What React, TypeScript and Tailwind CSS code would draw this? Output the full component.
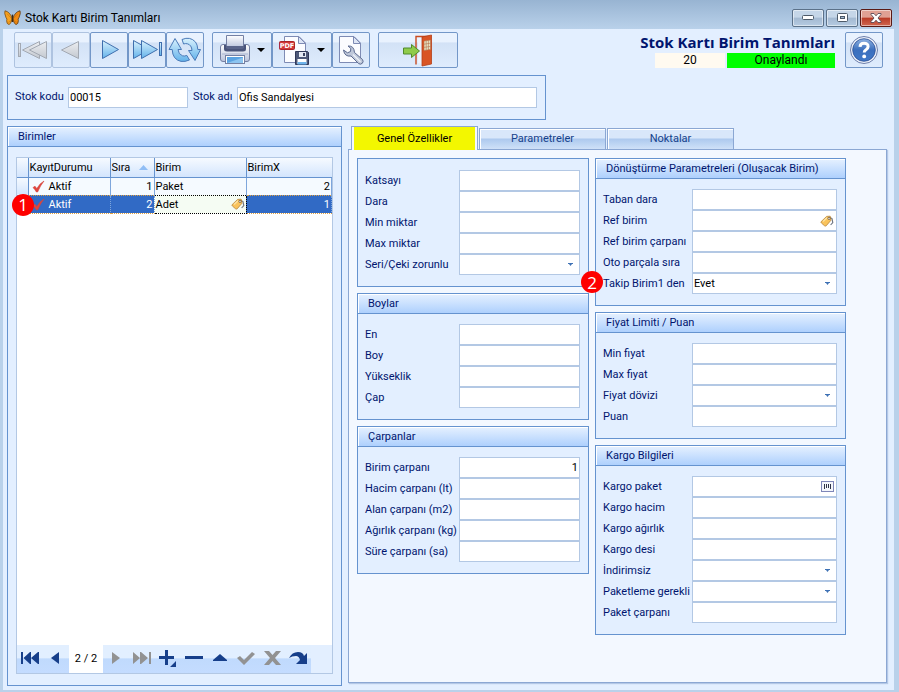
import React, { useId, useState } from 'react';

const TagIcon: React.FC = () => (
  <svg width="14" height="14" viewBox="0 0 14 14" aria-hidden="true">
    <path d="M9 3 L12 4.6 L12.8 8.6 L10.6 11" fill="none" stroke="#6b7280" strokeWidth="1.1" />
    <path d="M1.2 7.6 L6.6 2.4 L10.2 2.2 L11 6.2 L6.2 11.8 Q5.4 12.4 4.6 11.800 L1.4 9 Q0.6 8.3 1.2 7.6 Z" fill="#f9c35c" stroke="#b5843c" strokeWidth="0.8" />
    <path d="M3 7.6 L7 3.8" stroke="#fde2a0" strokeWidth="1.4" />
    <circle cx="9" cy="4.400" r="1.100" fill="#fff" stroke="#6b5335" strokeWidth="0.800" />
  </svg>
);

const BarcodeIcon: React.FC = () => (
  <svg width="13" height="11" viewBox="0 0 13 11" shapeRendering="crispEdges" aria-hidden="true">
    <rect x="0.5" y="0.5" width="12" height="10" fill="#f4f6fb" stroke="#7f86b8" />
    <path d="M3.500 3v5M5.500 3v4M7.500 3v4M9.500 3v5" stroke="#2f3346" />
  </svg>
);

const CaretIcon: React.FC = () => (
  <svg width="5" height="3" viewBox="0 0 5 3" aria-hidden="true">
    <path d="M0 0h5v1H4L2.5 3 1 1H0z" fill="#3f72b5" />
  </svg>
);

const RedCheck: React.FC = () => (
  <svg width="13" height="13" viewBox="0 0 13 13" aria-hidden="true">
    <path d="M1 7.6 L3 6.2 L4.8 8.6 Q7.6 3.4 12 1 Q8.4 5.4 5.6 12 L4.4 12 Q2.8 9.2 1 7.6 Z" fill="#e2453c" stroke="#d0453e" strokeWidth="0.6" />
  </svg>
);

const ButterflyIcon: React.FC = () => (
  <svg width="17" height="16" viewBox="0 0 17 16" aria-hidden="true">
    <path d="M8 8 Q6 2 1 .8 Q0 3 2 7.6 Q3.6 9.2 2.6 10.4 Q2.6 14.2 5 14.6 Q7.4 13.6 8 9 Z" fill="#f7a21f" stroke="#7a4a14" strokeWidth="0.8" />
    <path d="M9 8 Q11 2 16 .8 Q17 3 15 7.6 Q13.4 9.2 14.4 10.4 Q14.4 14.2 12 14.6 Q9.6 13.6 9 9 Z" fill="#f08a12" stroke="#5a3a18" strokeWidth="0.8" />
    <path d="M8 9 L3 3.6 M9 9 L14 3.6 M8 10 L4.4 12.4 M9 10 L12.6 12.4" stroke="#b5660f" strokeWidth="0.5" />
    <path d="M8.5 4.6V12" stroke="#3a2a1a" strokeWidth="1.4" />
  </svg>
);

const SharedGradients: React.FC = () => (
  <svg width="0" height="0" className="absolute" aria-hidden="true">
    <defs>
      <linearGradient id="arrowBlue" x1="0" y1="0" x2="0" y2="1">
        <stop offset="0" stopColor="#d9f1fd" />
        <stop offset="1" stopColor="#62b2ea" />
      </linearGradient>
      <linearGradient id="arrowGray" x1="0" y1="0" x2="0" y2="1">
        <stop offset="0" stopColor="#eceef1" />
        <stop offset="1" stopColor="#c3c8d0" />
      </linearGradient>
      <linearGradient id="ball" x1="0" y1="0" x2="0" y2="1">
        <stop offset="0" stopColor="#8fb2e2" />
        <stop offset="0.5" stopColor="#3b6fbd" />
        <stop offset="1" stopColor="#3f78c8" />
      </linearGradient>
      <linearGradient id="metal" x1="0" y1="0" x2="0" y2="1">
        <stop offset="0" stopColor="#ffffff" />
        <stop offset="1" stopColor="#b9c3dc" />
      </linearGradient>
    </defs>
  </svg>
);

const FirstIcon: React.FC = () => (
  <svg width="32" height="32" viewBox="0 0 32 32" fill="url(#arrowGray)" stroke="#a3a9b3" aria-hidden="true">
    <rect x="1.5" y="9.5" width="2" height="13" />
    <path d="M22.5 7.5 V24.5 L5.5 16 Z" />
    <path d="M29.5 7.5 V24.5 L12.5 16 Z" />
  </svg>
);

const PrevIcon: React.FC = () => (
  <svg width="32" height="32" viewBox="0 0 32 32" aria-hidden="true">
    <path d="M23.5 7.5 V24.5 L6.5 16 Z" fill="url(#arrowGray)" stroke="#a3a9b3" />
  </svg>
);

const NextIcon: React.FC = () => (
  <svg width="32" height="32" viewBox="0 0 32 32" aria-hidden="true">
    <path d="M9.5 6.5 V24.5 L25.5 15.5 Z" fill="url(#arrowBlue)" stroke="#3f6fae" />
  </svg>
);

const LastIcon: React.FC = () => (
  <svg width="32" height="32" viewBox="0 0 32 32" fill="url(#arrowBlue)" stroke="#3f6fae" aria-hidden="true">
    <path d="M2.5 6.5 V24.5 L18.5 15.5 Z" />
    <path d="M10.500 6.500 V24.500 L26.500 15.500 Z" />
    <rect x="28.5" y="8.5" width="2" height="13" />
  </svg>
);

const RefreshIcon: React.FC = () => (
  <svg width="34" height="32" viewBox="0 0 34 32" fill="url(#arrowBlue)" stroke="#4a7ab8" aria-hidden="true">
    <path d="M14 5.500 Q22 2 27.500 8 Q29.500 10.500 29.800 15.500 H32.500 L27 26.500 L20.500 16.500 H24 Q23.600 11 19.500 9.800 Q17.600 9.200 15.600 10 Z" />
    <path d="M21.500 26 Q12 30 6.500 23.500 Q4.400 20.500 4.200 15.500 H1 L7 4.500 L13.500 15.500 H10 Q10.400 20.500 14.500 21.800 Q16.600 22.400 18.800 21.400 Z" />
  </svg>
);

const PrinterIcon: React.FC = () => (
  <svg width="32" height="32" viewBox="0 0 32 32" aria-hidden="true">
    <path d="M1.5 13 Q1.5 10.5 4 10.5 H28 Q30.5 10.5 30.5 13 V25 Q30.5 27.5 28 27.5 H4 Q1.5 27.5 1.5 25 Z" fill="url(#metal)" stroke="#7480a3" />
    <path d="M5 11 H27 V15 Q27 17.5 24 17.5 H8 Q5 17.5 5 15 Z" fill="#49547a" />
    <path d="M7.5 1.5 H24.5 V13.5 H7.5 Z" fill="url(#metal)" stroke="#7480a3" />
    <path d="M7 12 h18 v1 q0 2 -2 2 h-14 q-2 0 -2 -2z" fill="#59648a" />
    <rect x="6.500" y="21.500" width="19" height="8" fill="#fff" stroke="#7480a3" />
    <rect x="8" y="23" width="16" height="6" fill="#5aa3e2" />
    <path d="M8 29 L24 23.500 V29Z" fill="#8cc4f0" />
    <path d="M3 20H29" stroke="#a9b4d0" />
  </svg>
);

const PdfIcon: React.FC = () => (
  <svg width="32" height="32" viewBox="0 0 32 32" aria-hidden="true">
    <path d="M5.500 2.500 H20 L26.500 9 V28.500 H5.500 Z" fill="#fbfcff" stroke="#7e8bb4" />
    <path d="M19.500 2.500 V9.500 H26.500 Z" fill="#dde5f5" stroke="#7e8bb4" />
    <rect x="0.500" y="7.500" width="15" height="8" rx="1" fill="#d3373a" stroke="#a92327" />
    <text x="8" y="14" textAnchor="middle" fontSize="6.500" fontWeight="700" fill="#fff" fontFamily="'DejaVu Sans', sans-serif">PDF</text>
    <path d="M16.500 17.500 H28.500 L29.500 18.500 V30.500 H16.500 Z" fill="#4d5878" stroke="#2f3858" />
    <rect x="20" y="18" width="7" height="5" fill="#e5eaf4" />
    <rect x="24" y="19" width="2" height="3" fill="#39425f" />
    <rect x="18.500" y="25" width="9" height="5" fill="#fff" />
    <rect x="18.500" y="28" width="9" height="2.500" fill="#6fb4ec" />
  </svg>
);

const PageToolIcon: React.FC = () => (
  <svg width="32" height="32" viewBox="0 0 32 32" aria-hidden="true">
    <path d="M4.500 2.500 H19 L25.500 9 V28.500 H4.500 Z" fill="#fbfcff" stroke="#7e8bb4" />
    <path d="M18.500 2.500 V9.500 H25.500 Z" fill="#dde5f5" stroke="#7e8bb4" />
    <path d="M13 12 Q19 11.500 19.500 18.500 L27.500 25.500 Q28.800 27.500 27.400 29.200 Q25.600 31 23.600 29.600 L16 22 Q9.500 23 8.500 16 L12.500 18.800 L15.500 17.500 L15.800 14.500 Z" fill="#bfc8da" stroke="#5c6a90" />
    <path d="M18 20.500L25.500 27.800" stroke="#eef2f8" strokeWidth="1.200" />
  </svg>
);

const ExitIcon: React.FC = () => (
  <svg width="32" height="34" viewBox="0 0 32 34" aria-hidden="true">
    <path d="M14 31.500 V3.500 H28" fill="none" stroke="#c94a20" strokeWidth="1.400" />
    <path d="M16 30V5H20V31z" fill="#edf3fd" />
    <path d="M20 4 L29.500 2 V31 L20 33 Z" fill="#d95424" stroke="#b53f16" strokeWidth="0.800" />
    <path d="M22 8 L28.500 7 V16.500 L22 17.500 Z" fill="#e6e4c4" stroke="#b5704a" strokeWidth="0.600" />
    <path d="M24.200 7.600V17.300M26.400 7.300V17M22 11.200L28.500 10.200M22 14.400L28.500 13.400" stroke="#b5704a" strokeWidth="0.600" />
    <path d="M1.500 15 H9.500 V11.500 L17.500 18 L9.500 24.500 V21 H1.500 Z" fill="#8fcb4a" stroke="#4f8a2c" />
  </svg>
);

const HelpIcon: React.FC = () => (
  <svg width="32" height="32" viewBox="0 0 32 32" aria-hidden="true">
    <circle cx="16" cy="16" r="13.500" fill="#eef2fa" stroke="#6c7eab" />
    <circle cx="16" cy="16" r="11.300" fill="url(#ball)" stroke="#2c4f94" strokeWidth="0.800" />
    <path d="M12 12.800 Q12.200 9.200 16 9.200 Q20.200 9.200 20.100 12.600 Q20 14.500 18 15.800 Q16.200 16.900 16.200 18.600" fill="none" stroke="#fff" strokeWidth="3" />
    <circle cx="16.200" cy="22.400" r="1.900" fill="#fff" />
  </svg>
);

interface ToolButtonProps {
  label: string;
  width?: string;
  disabled?: boolean;
  menu?: boolean;
  children: React.ReactNode;
}

const ToolButton: React.FC<ToolButtonProps> = ({ label, width = 'w-[38px]', disabled, menu, children }) => (
  <button
    type="button"
    aria-label={label}
    disabled={disabled}
    className={`flex h-9 shrink-0 items-center justify-center rounded-xs border bg-linear-to-b from-[#e9f2fe] from-25% via-[#d3e2f6] via-30% to-[#dfecfd] ${width} ${
      disabled ? 'border-[#aec3e0]' : 'border-[#7397c8]'
    }`}
  >
    {children}
    {menu && (
      <svg width="8" height="4" viewBox="0 0 8 4" className="ml-1.5" aria-hidden="true">
        <path d="M0 0h8L4 4z" fill="#000" />
      </svg>
    )}
  </button>
);

interface FieldProps {
  label: string;
  kind?: 'text' | 'select' | 'tag' | 'barcode';
  value?: string;
  alignRight?: boolean;
  badge?: string;
}

const Badge: React.FC<{ text: string; className: string }> = ({ text, className }) => (
  <span className={`absolute z-10 flex size-[22px] items-center justify-center rounded-full bg-[#fe0000] font-['Open_Sans',sans-serif] text-[17px] leading-none text-white ${className}`}>
    {text}
  </span>
);

const Field: React.FC<FieldProps> = ({ label, kind = 'text', value = '', alignRight, badge }) => {
  const id = useId();
  const box = 'block h-[21px] w-full appearance-none rounded-none border border-[#b3c8e4] bg-white px-px text-[11px] text-black outline-none';

  return (
    <>
      <label htmlFor={id} className="relative h-[21px] leading-[21px] whitespace-nowrap">
        {badge && <Badge text={badge} className="-left-[22px] -top-0.5" />}
        {label}
      </label>
      <div className="relative">
        {kind === 'select' ? (
          <select id={id} defaultValue={value} className={`${box} pt-0.5`}>
            <option value=""></option>
            <option value="Evet">Evet</option>
            <option value="Hayır">Hayır</option>
          </select>
        ) : (
          <input id={id} type="text" defaultValue={value} className={`${box} ${alignRight ? 'text-right' : ''}`} />
        )}
        {kind !== 'text' && (
          <span className={`pointer-events-none absolute inset-y-0 flex items-center ${kind === 'select' ? 'right-[7px]' : 'right-[3px]'}`}>
            {kind === 'select' && <CaretIcon />}
            {kind === 'tag' && <TagIcon />}
            {kind === 'barcode' && <BarcodeIcon />}
          </span>
        )}
      </div>
    </>
  );
};

interface GroupProps {
  title?: string;
  wide?: boolean;
  fields: FieldProps[];
}

const PanelTitle: React.FC<{ children: React.ReactNode }> = ({ children }) => (
  <h2 className="h-5 border-b border-[#6593cf] bg-linear-to-b from-[#e6f1ff] to-[#aed0fd] pl-[10px] leading-[19px] shadow-[inset_1px_1px_0_#fff]">
    {children}
  </h2>
);

const Group: React.FC<GroupProps> = ({ title, wide, fields }) => (
  <section className="border border-[#6593cf] bg-[#e3efff]">
    {title && <PanelTitle>{title}</PanelTitle>}
    <div className={`grid pt-[10px] pr-2 pb-[11px] pl-[7px] ${wide ? 'grid-cols-[89px_1fr]' : 'grid-cols-[94px_1fr]'} ${title ? '' : 'pt-[11px]'}`}>
      {fields.map((field) => (
        <Field key={field.label} {...field} />
      ))}
    </div>
  </section>
);

const leftGroups: GroupProps[] = [
  {
    fields: [
      { label: 'Katsayı' },
      { label: 'Dara' },
      { label: 'Min miktar' },
      { label: 'Max miktar' },
      { label: 'Seri/Çeki zorunlu', kind: 'select' },
    ],
  },
  {
    title: 'Boylar',
    fields: [{ label: 'En' }, { label: 'Boy' }, { label: 'Yükseklik' }, { label: 'Çap' }],
  },
  {
    title: 'Çarpanlar',
    fields: [
      { label: 'Birim çarpanı', value: '1', alignRight: true },
      { label: 'Hacim çarpanı (lt)' },
      { label: 'Alan çarpanı (m2)' },
      { label: 'Ağırlık çarpanı (kg)' },
      { label: 'Süre çarpanı (sa)' },
    ],
  },
];

const rightGroups: GroupProps[] = [
  {
    title: 'Dönüştürme Parametreleri (Oluşacak Birim)',
    fields: [
      { label: 'Taban dara' },
      { label: 'Ref birim', kind: 'tag' },
      { label: 'Ref birim çarpanı' },
      { label: 'Oto parçala sıra' },
      { label: 'Takip Birim1 den', kind: 'select', value: 'Evet', badge: '2' },
    ],
  },
  {
    title: 'Fiyat Limiti / Puan',
    fields: [
      { label: 'Min fiyat' },
      { label: 'Max fiyat' },
      { label: 'Fiyat dövizi', kind: 'select' },
      { label: 'Puan' },
    ],
  },
  {
    title: 'Kargo Bilgileri',
    fields: [
      { label: 'Kargo paket', kind: 'barcode' },
      { label: 'Kargo hacim' },
      { label: 'Kargo ağırlık' },
      { label: 'Kargo desi' },
      { label: 'İndirimsiz', kind: 'select' },
      { label: 'Paketleme gerekli', kind: 'select' },
      { label: 'Paket çarpanı' },
    ],
  },
];

const navLeft = [
  { label: 'İlk', icon: <path d="M1 2h2v12H1zM10 2v12L3.500 8zM18 2v12L11 8zM10 2h1v12h-1zM18 2h1v12h-1z" />, width: 'w-[25px]' },
  { label: 'Önceki', icon: <path d="M13 2v12L5 8z" />, width: 'w-[27px]' },
];

const navRight = [
  { label: 'Sonraki', off: true, icon: <path d="M6 2v12L14 8z" /> },
  { label: 'Son', off: true, icon: <path d="M1 2v12L8 8zM9 2v12L16 8zM17 2h2v12h-2zM8 2h1v12H8z" /> },
  { label: 'Ekle', icon: <path d="M7 0h3v6h6v3h-6v6H7V9H1V6h6zM18 11v6h-6z" /> },
  { label: 'Sil', icon: <path d="M1 6h18v3H1z" /> },
  { label: 'Düzenle', icon: <path d="M10 4l7 6v1H3v-1z" /> },
  { label: 'Kaydet', off: true, icon: <path d="M1 8l3-2 4 4 8-8 3 2L8 15z" /> },
  { label: 'İptal', off: true, icon: <path d="M2 1h5l3.500 4L14 1h5l-6 7 6 7h-5l-3.500-4L7 15H2l6-7z" /> },
  { label: 'Yenile', icon: <path d="M1 8Q4 2 10 2q5 0 6 4l3-3v11H8l4-4q-1-4-4-4-4 0-7 2z" /> },
];

const rows = [
  { status: 'Aktif', order: 1, unit: 'Paket', factor: 2 },
  { status: 'Aktif', order: 2, unit: 'Adet', factor: 1 },
];

const UnitsTable: React.FC = () => {
  const head = 'h-[19px] border-r border-b border-[#6593cf] p-0 pt-px pl-px text-left font-normal';

  return (
    <table className="w-full table-fixed border-collapse text-black">
      <colgroup>
        <col className="w-[11px]" />
        <col className="w-[82px]" />
        <col className="w-[44px]" />
        <col className="w-[92px]" />
        <col />
      </colgroup>
      <thead>
        <tr className="bg-linear-to-b from-[#f6faff] to-[#d3e5fd]">
          <th className={head} aria-label="Seçim"></th>
          <th className={head}>KayıtDurumu</th>
          <th className={head}>
            <span className="flex items-center justify-between pr-1.5">
              Sıra
              <svg width="9" height="5" viewBox="0 0 9 5" aria-hidden="true">
                <path d="M4.500 0L9 5H0z" fill="#8fbdf5" />
              </svg>
            </span>
          </th>
          <th className={head}>Birim</th>
          <th className="h-[19px] border-b border-[#6593cf] p-0 pt-px pl-px text-left font-normal">BirimX</th>
        </tr>
      </thead>
      <tbody>
        {rows.map((row) => {
          const active = row.order === 2;
          const cell = active
            ? 'border-y border-dotted border-y-[#e0a040] border-r border-r-[#7ea6dc] p-0'
            : 'border-r border-r-[#7ea6dc] p-0';
          return (
            <tr key={row.order} className={active ? 'bg-[#316ac5] text-white' : 'bg-[#f5faff]'}>
              <td className="relative border-r border-b border-[#6593cf] bg-linear-to-b from-[#f6faff] to-[#d3e5fd] p-0">
                {active && <Badge text="1" className="-left-[5px] -top-0.5" />}
              </td>
              <td className={cell}>
                <span className="flex items-center gap-1 pl-[3px] leading-[17px]">
                  <RedCheck />
                  {row.status}
                </span>
              </td>
              <td className={`${cell} pr-px text-right leading-[17px]`}>{row.order}</td>
              <td className={active ? 'border border-dotted border-black bg-[#f5fcf3] p-0 text-black' : cell}>
                <span className="flex items-center justify-between px-px leading-[17px]">
                  {row.unit}
                  {active && <TagIcon />}
                </span>
              </td>
              <td className={`${cell} pr-px text-right leading-[17px]`}>{row.factor}</td>
            </tr>
          );
        })}
      </tbody>
    </table>
  );
};

const tabs = ['Genel Özellikler', 'Parametreler', 'Noktalar'];

const App: React.FC = () => {
  const [tab, setTab] = useState(tabs[0]);
  const winButton = 'flex h-[18px] w-8 items-center justify-center rounded-xs border shadow-[inset_0_0_0_1px_rgba(255,255,255,0.5)]';

  return (
    <div className="flex min-h-screen flex-col bg-[#b9d1ea] pb-0.5 font-['Roboto','Noto_Sans',sans-serif] text-[11px] text-[#00156e]">
      <SharedGradients />

      {/* Window title bar */}
      <header className="flex h-[29px] items-center bg-linear-to-b from-[#98b4d2] to-[#b9d1ea] pt-1.5 pr-[7px] pl-1 text-black">
        <ButterflyIcon />
        <h1 className="ml-1 flex-1 text-[12px]">Stok Kartı Birim Tanımları</h1>
        <div className="flex gap-0.5">
          <button type="button" aria-label="Simge durumuna küçült" className={`${winButton} border-[#5b7189] bg-linear-to-b from-[#c5d6e8] from-45% via-[#a3b9d1] via-50% to-[#b5cbe2]`}>
            <svg width="12" height="5" aria-hidden="true"><rect x="0.5" y="0.5" width="11" height="4" rx="1" fill="#fff" stroke="#4d5a69" /></svg>
          </button>
          <button type="button" aria-label="Ekranı kapla" className={`${winButton} border-[#5b7189] bg-linear-to-b from-[#c5d6e8] from-45% via-[#a3b9d1] via-50% to-[#b5cbe2]`}>
            <svg width="11" height="9" aria-hidden="true">
              <rect x="0.5" y="0.5" width="10" height="8" rx="1" fill="#fff" stroke="#4d5a69" />
              <rect x="3.500" y="3.500" width="4" height="2" fill="#a3b9d1" stroke="#4d5a69" />
            </svg>
          </button>
          <button type="button" aria-label="Kapat" className={`${winButton} border-[#5a1a14] bg-linear-to-b from-[#e0a093] from-45% via-[#b93a25] via-50% to-[#d0664f]`}>
            <svg width="12" height="10" viewBox="0 0 12 10" aria-hidden="true">
              <path d="M1 .500H4L6 2.800 8 .500h3v1L8 5l3 3.500v1H8L6 7.200 4 9.500H1v-1L4 5 1 1.500z" fill="#fff" stroke="#5c4a55" strokeWidth="0.900" />
            </svg>
          </button>
        </div>
      </header>

      <main className="mr-[5px] ml-[3px] flex flex-1 flex-col bg-[#e3efff] pb-1">
        <div className="flex pt-[3px] pr-[11px] pl-[11px]">
          <ToolButton label="İlk kayıt" disabled><FirstIcon /></ToolButton>
          <ToolButton label="Önceki kayıt" disabled><PrevIcon /></ToolButton>
          <ToolButton label="Sonraki kayıt"><NextIcon /></ToolButton>
          <ToolButton label="Son kayıt"><LastIcon /></ToolButton>
          <ToolButton label="Yenile"><RefreshIcon /></ToolButton>
          <div className="ml-2 flex">
            <ToolButton label="Yazdır" width="w-[60px]" menu><PrinterIcon /></ToolButton>
            <ToolButton label="PDF kaydet" width="w-[60px]" menu><PdfIcon /></ToolButton>
            <ToolButton label="Ayarlar"><PageToolIcon /></ToolButton>
          </div>
          <div className="ml-2">
            <ToolButton label="Çıkış" width="w-20"><ExitIcon /></ToolButton>
          </div>
          <div className="mr-[10px] ml-auto flex flex-col items-end">
            <strong className="font-['Open_Sans',sans-serif] text-[15px] leading-[21px] whitespace-nowrap">Stok Kartı Birim Tanımları</strong>
            <div className="flex gap-0.5 text-center text-[12px] leading-[15px] text-black">
              <span className="w-[70px] bg-[#fffaf0]">20</span>
              <span className="w-[108px] bg-[#00ff00]">Onaylandı</span>
            </div>
          </div>
          <ToolButton label="Yardım"><HelpIcon /></ToolButton>
        </div>

        <form className="mt-[7px] ml-1 flex h-[45px] w-full max-w-[539px] items-center border border-[#6593cf] pr-2 pl-[7px]">
          <label htmlFor="code" className="w-[53px]">Stok kodu</label>
          <input id="code" type="text" defaultValue="00015" className="h-[21px] w-[120px] border border-[#b3c8e4] bg-white px-px text-black outline-none" />
          <label htmlFor="name" className="ml-[5px] w-11">Stok adı</label>
          <input id="name" type="text" defaultValue="Ofis Sandalyesi" className="h-[21px] min-w-0 flex-1 border border-[#b3c8e4] bg-white px-px text-black outline-none" />
        </form>

        <div className="mt-1.5 grid flex-1 grid-cols-[335fr_539fr] gap-1.5 pr-[7px] pl-1">
          <section className="flex flex-col border border-[#6593cf]">
            <PanelTitle>Birimler</PanelTitle>
            <div className="mx-2 mt-[10px] mb-[11px] flex flex-1 flex-col border border-[#b3c8e4] bg-white">
              <UnitsTable />
              <nav className="mt-auto flex h-7 bg-[#e3efff]">
                <div className="flex items-center bg-linear-to-b from-[#e2efff] from-45% via-[#c0dafd] via-50% to-[#c4dcff] text-[#173f8a]">
                  {navLeft.map((item) => (
                    <button key={item.label} type="button" aria-label={item.label} className={`flex justify-center ${item.width}`}>
                      <svg width="20" height="18" viewBox="0 0 20 18" fill="currentColor" aria-hidden="true">{item.icon}</svg>
                    </button>
                  ))}
                  <span className="flex w-[34px] items-center justify-center self-stretch bg-white whitespace-nowrap text-black">2 / 2</span>
                  {navRight.map((item) => (
                    <button key={item.label} type="button" aria-label={item.label} disabled={item.off} className={`flex w-[26px] justify-center ${item.off ? 'text-[#929292]' : ''}`}>
                      <svg width="20" height="18" viewBox="0 0 20 18" fill="currentColor" aria-hidden="true">{item.icon}</svg>
                    </button>
                  ))}
                </div>
              </nav>
            </div>
          </section>

          <div className="flex flex-col pb-[3px]">
            <div role="tablist" className="flex h-[23px] items-end gap-px pl-[3px]">
              {tabs.map((name) =>
                tab === name ? (
                  <button key={name} type="button" role="tab" aria-selected className="z-10 -mb-px h-6 w-[127px] border border-b-0 border-[#8ba7d3] bg-[#f3f8ff] px-0.5 text-black">
                    <span className="flex h-full items-center justify-center bg-[#f3f700] pt-px">{name}</span>
                  </button>
                ) : (
                  <button
                    key={name}
                    type="button"
                    role="tab"
                    aria-selected={false}
                    onClick={() => setTab(name)}
                    className="h-[21px] w-[127px] border border-b-0 border-[#8ba7d3] bg-linear-to-b from-[#d9e7fa] from-45% via-[#adc9ee] via-50% to-[#cfe1f8] text-[#15428b] shadow-[inset_1px_1px_0_#fff]"
                  >
                    {name}
                  </button>
                )
              )}
            </div>
            <div role="tabpanel" className="grid flex-1 grid-cols-[232fr_251fr] items-start gap-1.5 border border-[#8ba7d3] bg-[#f3f8ff] pt-2 pr-10 pb-10 pl-2 shadow-[1px_1px_1px_#b4c8e6]">
              <div className="flex flex-col gap-1.5">
                {leftGroups.map((group, i) => (
                  <Group key={i} {...group} />
                ))}
              </div>
              <div className="flex flex-col gap-1.5">
                {rightGroups.map((group, i) => (
                  <Group key={i} {...group} wide />
                ))}
              </div>
            </div>
          </div>
        </div>
      </main>
    </div>
  );
};

export default App;
